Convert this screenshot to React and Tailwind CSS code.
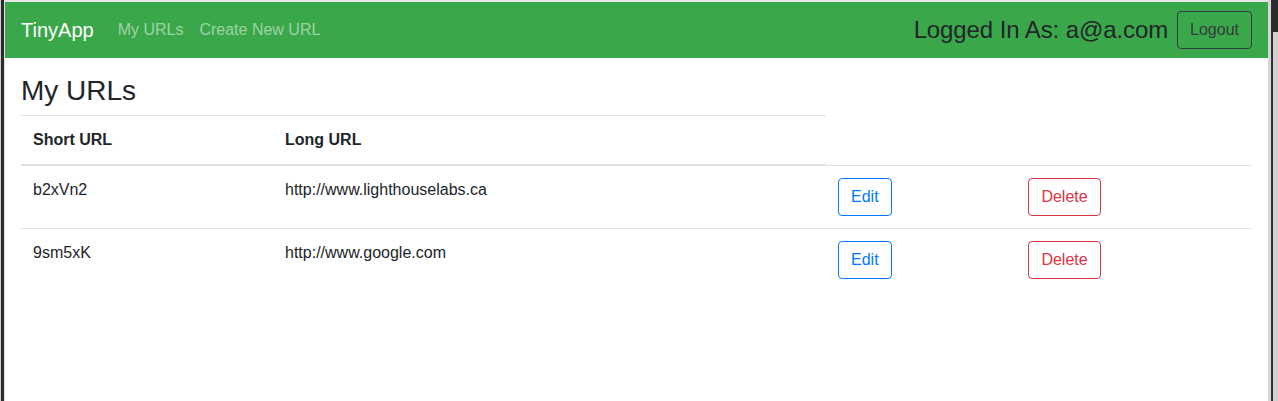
import React from "react";

const urls = [
  { short: "b2xVn2", long: "http://www.lighthouselabs.ca" },
  { short: "9sm5xK", long: "http://www.google.com" },
];

const App = () => {
  return (
    <div
      className="flex h-[401px] w-[1278px] overflow-hidden bg-white text-[#212529]"
      style={{ fontFamily: '"Liberation Sans", Arial, sans-serif' }}
    >
      {/* left window edge */}
      <div className="w-[1px] bg-[#cfcfcf]" />
      <div className="w-[3px] bg-[#2b2b2b]" />
      <div className="w-[1px] bg-[#dde3ea]" />

      <div className="flex flex-1 flex-col">
        <div className="h-[2px] bg-[#e6e6e6]" />
        <nav className="flex h-[56px] items-center bg-[#3aa84a] px-4">
          <span className="mr-4 text-[20px] leading-[30px] text-white">TinyApp</span>
          <a className="px-2 text-base leading-6 text-white/50">My URLs</a>
          <a className="px-2 text-base leading-6 text-white/50">Create New URL</a>
          <div className="ml-auto flex items-center gap-[9px]">
            <span className="text-[24px] leading-[30px] tracking-[-0.1px] text-[#212529]">Logged In As: a@a.com</span>
            <button className="h-[38px] rounded border border-[#343a40] px-3 text-base leading-6 text-[#343a40]">
              Logout
            </button>
          </div>
        </nav>

        <main className="px-4 pt-4">
          <h3 className="mb-2 text-[28px] leading-[33px] font-normal">My URLs</h3>
          <table className="w-[1231px] border-collapse text-left text-base leading-6">
            <thead>
              <tr>
                <th className="w-[252px] border-t border-b-2 border-[#dee2e6] p-3 font-bold">Short URL</th>
                <th className="w-[553px] border-t border-b-2 border-[#dee2e6] p-3 font-bold">Long URL</th>
              </tr>
            </thead>
            <tbody>
              {urls.map((url) => (
                <tr key={url.short}>
                  <td className="border-t border-[#dee2e6] p-3 align-top">{url.short}</td>
                  <td className="border-t border-[#dee2e6] p-3 align-top">{url.long}</td>
                  <td className="w-[190px] border-t border-[#dee2e6] p-3 align-top">
                    <button className="h-[38px] rounded border border-[#007bff] px-3 text-base leading-6 text-[#007bff]">
                      Edit
                    </button>
                  </td>
                  <td className="w-[236px] border-t border-[#dee2e6] p-3 align-top">
                    <button className="h-[38px] w-[73px] rounded border border-[#dc3545] text-base leading-6 text-[#dc3545]">
                      Delete
                    </button>
                  </td>
                </tr>
              ))}
            </tbody>
          </table>
        </main>
      </div>

      {/* right window edge / scrollbar */}
      <div className="w-[3px] bg-[#d6d6d6]" />
      <div className="flex w-[7px] flex-col">
        <div className="h-[32px] bg-[#2b2d30]" />
        <div className="flex flex-1">
          <div className="w-[2px] bg-[#333333]" />
          <div className="flex-1 bg-[#d0d0d0]" />
        </div>
      </div>
    </div>
  );
};

export default App;
